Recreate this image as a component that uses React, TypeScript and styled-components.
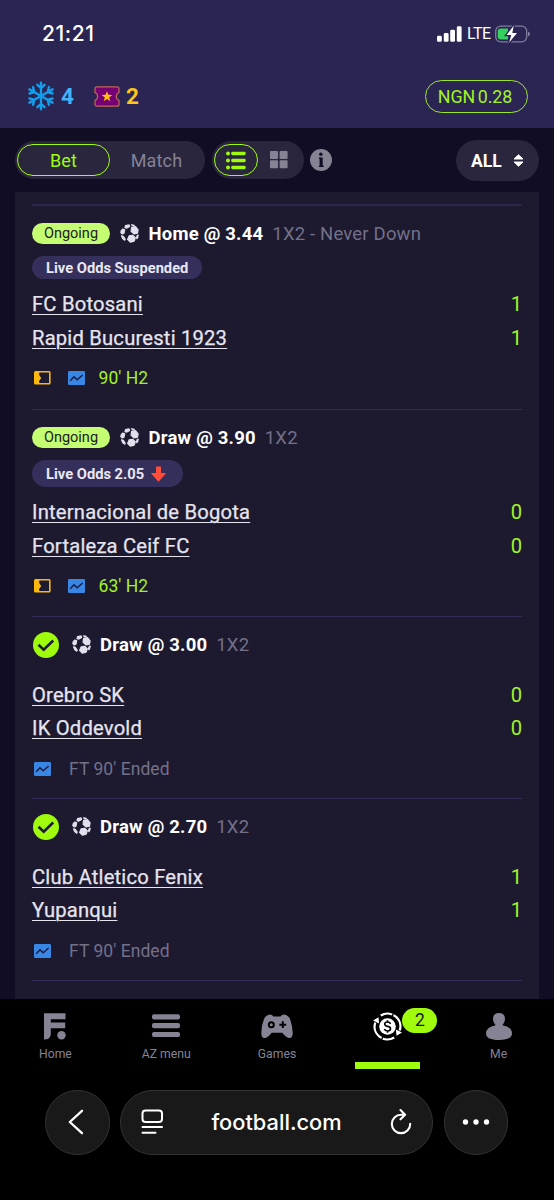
import React from 'react';
import styled, { createGlobalStyle } from 'styled-components';

const GlobalStyle = createGlobalStyle`
  * { box-sizing: border-box; }
  html, body { margin: 0; background: #000; }
  body { font-family: Roboto, "Liberation Sans", sans-serif; }
  svg { display: block; flex: none; }
`;

const LIME = '#9ffc0c';

const Screen = styled.div`
  width: 554px;
  height: 1200px;
  display: flex;
  flex-direction: column;
  overflow: hidden;
  background: #000;
`;

const Header = styled.header`
  height: 128px;
  flex: none;
  background: #2b2553;
`;

const StatusBar = styled.div`
  height: 64px;
  padding: 3px 24px 0 42px;
  display: flex;
  align-items: center;
  justify-content: space-between;
`;

const Clock = styled.span`
  font: 500 21px Inter, sans-serif;
  letter-spacing: 0.6px;
  color: #fff;
`;

const StatusIcons = styled.div`
  display: flex;
  align-items: center;
`;

const Network = styled.span`
  font: 400 16px Roboto, sans-serif;
  letter-spacing: -0.5px;
  color: #fff;
  margin: 0 4px 0 5px;
  width: 24px;
`;

const WalletBar = styled.div`
  height: 64px;
  padding: 0 26px 0 28px;
  display: flex;
  align-items: center;
`;

const Count = styled.span<{ $color: string }>`
  font-size: 22.5px;
  font-weight: 700;
  line-height: 28px;
  color: ${(p) => p.$color};
  width: 13px;
`;

const Balance = styled.div`
  margin-left: auto;
  width: 103px;
  height: 33px;
  border: 1.5px solid #9be827;
  border-radius: 17px;
  display: flex;
  align-items: center;
  justify-content: center;
  font-size: 17.8px;
  letter-spacing: -0.1px;
  word-spacing: -1.5px;
  padding-right: 3px;
  color: #a3f326;
  white-space: nowrap;
`;

const Body = styled.main`
  height: 871px;
  flex: none;
  overflow: hidden;
  background: #100d25;
  padding: 0 15px;
`;

const Toolbar = styled.div`
  height: 64px;
  display: flex;
  align-items: center;
`;

const Segment = styled.div<{ $width: number }>`
  width: ${(p) => p.$width}px;
  height: 38px;
  padding: 3px 2px;
  border-radius: 19px;
  background: #29263d;
  display: flex;
`;

const SegmentItem = styled.div<{ $width: number; $active?: boolean }>`
  width: ${(p) => p.$width}px;
  height: 32px;
  border-radius: 16px;
  border: ${(p) => (p.$active ? `1.5px solid ${LIME}` : '0')};
  color: ${(p) => (p.$active ? LIME : '#858298')};
  display: flex;
  align-items: center;
  justify-content: center;
  font-size: 18px;
  letter-spacing: 0.2px;
`;

const Filter = styled.div`
  margin-left: auto;
  width: 83px;
  height: 41px;
  border-radius: 21px;
  background: #29263d;
  color: #fff;
  font-size: 17.5px;
  font-weight: 700;
  display: flex;
  align-items: center;
  justify-content: space-between;
  padding: 1px 15px 0 15px;
`;

const Card = styled.section`
  height: 807px;
  background: #1d1a2f;
  padding: 12px 17px 0;
`;

const Match = styled.article<{ $first?: boolean }>`
  border-top: ${(p) => (p.$first ? 2 : 1)}px solid ${(p) => (p.$first ? '#2b2748' : '#332e55')};
  padding: ${(p) => (p.$first ? '14px 0 18.3px' : '14.7px 0 17.5px')};
`;

const MatchHead = styled.div<{ $settled: boolean }>`
  display: flex;
  align-items: center;
  height: ${(p) => (p.$settled ? 26 : 27)}px;
  margin-bottom: ${(p) => (p.$settled ? 19 : 9)}px;
`;

const Ongoing = styled.span`
  width: 78px;
  height: 21px;
  border-radius: 11px;
  background: #c4fd72;
  color: #1a1b22;
  font-size: 14.5px;
  line-height: 21px;
  text-align: center;
  margin-right: 10px;
`;

const CheckSlot = styled.span`
  width: 39.5px;
  padding-left: 1px;
`;

const Pick = styled.strong`
  font-size: 18.5px;
  font-weight: 700;
  letter-spacing: 0.2px;
  color: #fff;
  margin-left: 9.6px;
  white-space: nowrap;
`;

const Market = styled.span`
  font-size: 18.5px;
  letter-spacing: 0.18px;
  color: #73708a;
  margin-left: 9px;
  white-space: nowrap;
`;

const LiveOdds = styled.div<{ $tall: boolean }>`
  display: flex;
  align-items: center;
  gap: 7px;
  width: fit-content;
  height: ${(p) => (p.$tall ? 26.5 : 22.5)}px;
  padding: 1px ${(p) => (p.$tall ? 16.5 : 14)}px 0 14px;
  margin-bottom: ${(p) => (p.$tall ? 7.6 : 7.8)}px;
  border-radius: 14px;
  background: #352f5b;
  color: #e9e7f2;
  font-size: 14.7px;
  font-weight: 700;
`;

const TeamRow = styled.div`
  display: flex;
  justify-content: space-between;
  height: 33.5px;
  padding-top: 1px;
  line-height: 34px;
  font-size: 20.2px;
`;

const Team = styled.span`
  color: #e6e4ef;
  letter-spacing: 0.2px;
  -webkit-text-stroke: 0.25px #e6e4ef;
  text-decoration: underline;
  text-decoration-thickness: 1.3px;
  text-underline-offset: 2.6px;
`;

const Score = styled.span`
  color: #a3f326;
`;

const MatchFoot = styled.div`
  display: flex;
  align-items: center;
  height: 24px;
  margin-top: 13px;
  padding-left: 2px;
`;

const Period = styled.span<{ $ended: boolean }>`
  margin-left: ${(p) => (p.$ended ? 18 : 14)}px;
  font-size: 17.5px;
  letter-spacing: 0.05px;
  color: ${(p) => (p.$ended ? '#73708a' : '#a3f326')};
`;

const TabBar = styled.nav`
  height: 71px;
  flex: none;
  display: grid;
  grid-template-columns: repeat(5, 1fr);
`;

const Tab = styled.div`
  position: relative;
  display: flex;
  flex-direction: column;
  align-items: center;
  padding-top: 11px;
  color: #858394;
  font-size: 12.2px;
`;

const TabIcon = styled.div`
  height: 32px;
  display: flex;
  align-items: center;
`;

const TabLabel = styled.span`
  line-height: 25px;
`;

const ActiveMark = styled.div`
  width: 65px;
  height: 7px;
  margin: 20px 0 0 -1px;
  background: ${LIME};
`;

const Badge = styled.span`
  position: absolute;
  left: 70px;
  top: 9px;
  width: 35px;
  height: 25px;
  border-radius: 13px;
  background: ${LIME};
  color: #15171b;
  font-size: 17.5px;
  line-height: 25px;
  text-align: center;
`;

const BrowserBar = styled.footer`
  display: flex;
  gap: 10.5px;
  padding: 20px 0 0 45px;
`;

const RoundButton = styled.div`
  width: 64.5px;
  height: 64.5px;
  border-radius: 50%;
  border: 1px solid #333;
  background: #191919;
  display: flex;
  align-items: center;
  justify-content: center;
`;

const AddressBar = styled.div`
  width: 313px;
  height: 64.5px;
  border-radius: 33px;
  border: 1px solid #333;
  background: #191919;
  display: flex;
  align-items: center;
  justify-content: space-between;
  padding: 0 20px;
  color: #fff;
  font: 500 21.8px Inter, sans-serif;
`;

const SignalIcon = () => (
  <svg width="25" height="16" viewBox="0 0 25 16" fill="#fff">
    <rect x="0" y="9.8" width="4.8" height="6" rx="1.4" />
    <rect x="6.8" y="7" width="4.8" height="8.8" rx="1.4" />
    <rect x="13.2" y="3.7" width="4.8" height="12.1" rx="1.4" />
    <rect x="19.8" y="0.3" width="4.8" height="15.5" rx="1.4" />
  </svg>
);

const BatteryIcon = () => (
  <svg width="35" height="18" viewBox="0 0 35 18">
    <rect x="0.7" y="1.2" width="31" height="15.6" rx="5" fill="none" stroke="#807c9b" strokeWidth="1.3" />
    <path d="M33 6.5q2 .7 2 2.5t-2 2.5z" fill="#807c9b" />
    <path d="M6 3.5h7v11H6q-3.3 0-3.3-3.2V6.7Q2.7 3.5 6 3.5z" fill="#35d15f" />
    <path d="M18.8 0.5 11.6 10h4.6l-2 7.5L22 8h-4.7z" fill="#fff" stroke="#2b2553" strokeWidth="2.6" paintOrder="stroke" />
  </svg>
);

const SnowflakeIcon = () => (
  <svg width="26" height="30" viewBox="-13 -15 26 30" fill="none" stroke="#129cea" strokeWidth="2.4" strokeLinecap="round">
    {[0, 60, 120, 180, 240, 300].map((a) => (
      <path key={a} transform={`rotate(${a})`} d="M0 0V-13.3M-3.6 -11.2 0 -7.8 3.6 -11.2" />
    ))}
  </svg>
);

const TicketIcon = () => (
  <svg width="26" height="21" viewBox="0 0 26 21">
    <path
      d="M3 .8h20q2 0 2 2v3.7a4.2 4.2 0 0 0 0 7.8v3.9q0 2-2 2H3q-2 0-2-2v-3.9a4.2 4.2 0 0 0 0-7.8V2.8q0-2 2-2z"
      fill="#740073"
      stroke="#c06a50"
      strokeWidth="1.2"
    />
    <path d="m13 5.2 1.4 3.6 3.9.1-3.1 2.5 1.1 3.8-3.3-2.2-3.3 2.2 1.1-3.8-3.1-2.5 3.900-.1z" fill="#fdbd12" />
  </svg>
);

const ListIcon = () => (
  <svg width="20" height="19" viewBox="0 0 20 19" fill={LIME}>
    {[2.5, 9.5, 16.5].map((y) => (
      <React.Fragment key={y}>
        <circle cx="2" cy={y} r="2" />
        <rect x="5.2" y={y - 1.7} width="14.5" height="3.4" rx="1.4" />
      </React.Fragment>
    ))}
  </svg>
);

const GridIcon = () => (
  <svg width="18" height="18" viewBox="0 0 18 18" fill="#858394">
    <rect width="8" height="8" rx="1" />
    <rect x="9.6" width="8" height="8" rx="1" />
    <rect y="9.3" width="8" height="8" rx="1" />
    <rect x="9.6" y="9.3" width="8" height="8" rx="1" />
  </svg>
);

const InfoIcon = styled(({ className }: { className?: string }) => (
  <svg className={className} width="22" height="22" viewBox="0 0 22 22">
    <circle cx="11" cy="11" r="11" fill="#858394" />
    <circle cx="10.8" cy="5.2" r="1.7" fill="#100d25" />
    <path d="M8.9 8.5h3.8v8.2h1v1.4H8.9v-1.4h.7V9.9h-.7z" fill="#100d25" />
  </svg>
))`
  margin-left: 6px;
`;

const SortIcon = () => (
  <svg width="11" height="13" viewBox="0 0 11 13" fill="#fff" stroke="#fff" strokeWidth="1" strokeLinejoin="round">
    <path d="M5.5 .8 10 5H1zM5.5 12.2 10 8H1z" />
  </svg>
);

const BallIcon = () => (
  <svg width="19" height="19" viewBox="0 0 19 19" fill="#e2e0ec" stroke="#e2e0ec" strokeWidth="1.2" strokeLinejoin="round">
    <path d="m11.6 3.3 3.900-.7 2.600 3.200-.6 3.400-3.300.8-3.100-2.600z" />
    <path d="m9.200 11.800 3.400-.500 2.700 2.400-1.100 3.400-3.900 1.100-2.700-2.800z" />
    <path d="M5.500 1.700 9.100.9l.5 1.500-2.700 1.700-1.900-.4z" />
    <path d="m2.800 5 1.900.8-.7 3.300-1.700.9-1.500-1.400q0-2.200 2-3.600z" />
    <path d="m1.500 11.800 1.800.5 1.900 2.700-.5 1.200Q2.200 15 1.500 11.800zM11.500.8q2 0 2.800.7l-1.700.2zM18.200 11.200q-.2 2.400-1.400 3.500l-.2-1.400.7-1.900z" />
  </svg>
);

const CheckIcon = () => (
  <svg width="26" height="26" viewBox="0 0 26 26">
    <circle cx="13" cy="13" r="13" fill={LIME} />
    <path d="m5.5 12.8 5.200 5 9.500-9.300" fill="none" stroke="#1d1a2f" strokeWidth="2.6" />
  </svg>
);

const StreamIcon = styled(({ className }: { className?: string }) => (
  <svg className={className} width="17" height="14" viewBox="0 0 17 14">
    <rect x=".8" y=".8" width="15" height="12" rx=".7" fill="none" stroke="#fbb90d" strokeWidth="1.6" />
    <path d="M1 1h4.300v12H1z" fill="#fbb90d" />
    <path d="M4.900 2.700h2.300L10.700 7l-3.500 4.300H4.900L7.300 7z" fill="#1d1a2f" />
    <path d="M4.500 3.400 7.300 7l-2.800 3.600z" fill="#fbb90d" />
  </svg>
))`
  margin-right: 16.5px;
`;

const ChartIcon = () => (
  <svg width="17" height="14" viewBox="0 0 17 14">
    <rect width="17" height="14" rx="1.3" fill="#3987e5" />
    <path d="M2.2 9.8 6 5.8l3.2 3L14.6 4" fill="none" stroke="#1d1a40" strokeWidth="1.5" />
  </svg>
);

const DownIcon = () => (
  <svg width="15" height="16" viewBox="0 0 15 16" fill="#ff4d3c">
    <path d="M5 .4h5V7h4.2q1 .2.3 1L7.5 15.7.5 8q-.6-.8.3-1H5z" />
  </svg>
);

const LogoIcon = () => (
  <svg width="22" height="27" viewBox="0 0 22 27" fill="#858394">
    <path d="M0 .3h21.5v6H6.8v3.2h14.4v5.8H6.8v5.6q0 5.5-6.8 5.5z" />
    <circle cx="17.5" cy="22.3" r="4.2" />
  </svg>
);

const MenuIcon = () => (
  <svg width="28" height="24" viewBox="0 0 28 24" fill="#858394">
    <rect width="28" height="5.2" rx="2" y=".2" />
    <rect width="28" height="5.2" rx="2" y="9" />
    <rect width="28" height="5.2" rx="2" y="17.9" />
  </svg>
);

const GamepadIcon = () => (
  <svg width="32" height="25" viewBox="0 0 32 25">
    <path d="M7 1Q10.5-.3 12.5 2.6h7Q21.5-.3 25 1q3 1 4.2 4.6 2.6 7.4 2.5 13.5 0 6.3-4.8 4.7-2.7-1.2-5.7-5H10.8q-3 3.8-5.7 5Q.3 25.4.3 19.1.2 13 2.8 5.6 4 2 7 1z" fill="#858394" />
    <circle cx="10.3" cy="10.7" r="2.5" fill="none" stroke="#000" strokeWidth="2" />
    <path d="M21.8 7.3v6.8M18.4 10.7h6.8" stroke="#000" strokeWidth="2" />
  </svg>
);

const CoinIcon = () => (
  <svg width="29" height="29" viewBox="0 0 29 29" fill="none">
    <circle cx="14.5" cy="14.5" r="8.3" fill="#fff" />
    <path d="M17.5 11.9q-.7-1.900-3-1.900-2.800 0-2.800 2.100 0 1.800 2.800 2.300 3 .5 3 2.400 0 2.200-3 2.200-2.500 0-3.100-1.900M14.500 8.300v1.700M14.500 19v1.700" stroke="#000" strokeWidth="1.6" />
    <path d="M7.800 3.500A12.800 12.800 0 0 1 26.700 18.500M21.200 25.500A12.800 12.800 0 0 1 2.300 10.500" stroke="#fff" strokeWidth="2.3" />
    <path d="M0 8.500 5.500 5.200l.6 6.300zM29 20.500l-5.500 3.300-.6-6.300z" fill="#fff" />
    <path d="m19.200 4.500 1.200-3.500M9.800 24.500 8.600 28" stroke="#000" strokeWidth="1.3" />
  </svg>
);

const PersonIcon = () => (
  <svg width="26" height="27" viewBox="0 0 26 27" fill="#858394">
    <path d="M13 0q6 0 6 6.2 0 3.3-2.6 6Q26 14 26 20.5 26 27 13 27T0 20.5Q0 14 9.6 12.2 7 9.5 7 6.2 7 0 13 0z" />
  </svg>
);

const BackIcon = () => (
  <svg width="19" height="26" viewBox="0 0 19 26" fill="none" stroke="#fff" strokeWidth="2.3" strokeLinecap="round" strokeLinejoin="round">
    <path d="M14 1.8 1.8 13 14 24.2" />
  </svg>
);

const ReaderIcon = () => (
  <svg width="22" height="26" viewBox="0 0 22 26" fill="none" stroke="#fff" strokeWidth="2" strokeLinecap="round">
    <rect x="1.5" y="1.5" width="19.5" height="11.5" rx="3" />
    <path d="M1.5 18h19.5M1.5 23.7h13" />
  </svg>
);

const ReloadIcon = () => (
  <svg width="22" height="26" viewBox="0 0 22 26" fill="none" stroke="#fff" strokeWidth="2.1" strokeLinecap="round" strokeLinejoin="round">
    <path d="M14.5 5.7H11a9.2 9.2 0 1 0 9.2 9.2M10.5 1.1l4.6 4.6-4.6 4.6" />
  </svg>
);

const MoreIcon = () => (
  <svg width="28" height="6" viewBox="0 0 28 6" fill="#fff">
    <circle cx="3.5" cy="3" r="2.7" />
    <circle cx="14" cy="3" r="2.7" />
    <circle cx="24.5" cy="3" r="2.7" />
  </svg>
);

interface Bet {
  pick: string;
  market: string;
  live?: string;
  dropping?: boolean;
  teams: [string, number][];
  period: string;
  settled: boolean;
}

const bets: Bet[] = [
  { pick: 'Home @ 3.44', market: '1X2 - Never Down', live: 'Live Odds Suspended', teams: [['FC Botosani', 1], ['Rapid Bucuresti 1923', 1]], period: "90' H2", settled: false },
  { pick: 'Draw @ 3.90', market: '1X2', live: 'Live Odds 2.05', dropping: true, teams: [['Internacional de Bogota', 0], ['Fortaleza Ceif FC', 0]], period: "63' H2", settled: false },
  { pick: 'Draw @ 3.00', market: '1X2', teams: [['Orebro SK', 0], ['IK Oddevold', 0]], period: "FT 90' Ended", settled: true },
  { pick: 'Draw @ 2.70', market: '1X2', teams: [['Club Atletico Fenix', 1], ['Yupanqui', 1]], period: "FT 90' Ended", settled: true },
];

const MatchItem = ({ bet, first }: { bet: Bet; first: boolean }) => (
  <Match $first={first}>
    <MatchHead $settled={bet.settled}>
      {bet.settled ? <CheckSlot><CheckIcon /></CheckSlot> : <Ongoing>Ongoing</Ongoing>}
      <BallIcon />
      <Pick>{bet.pick}</Pick>
      <Market>{bet.market}</Market>
    </MatchHead>
    {bet.live && (
      <LiveOdds $tall={!!bet.dropping}>
        {bet.live}
        {bet.dropping && <DownIcon />}
      </LiveOdds>
    )}
    {bet.teams.map(([name, score]) => (
      <TeamRow key={name}>
        <Team>{name}</Team>
        <Score>{score}</Score>
      </TeamRow>
    ))}
    <MatchFoot>
      {!bet.settled && <StreamIcon />}
      <ChartIcon />
      <Period $ended={bet.settled}>{bet.period}</Period>
    </MatchFoot>
  </Match>
);

const TicketGap = styled.div`
  margin: 0 6px 0 20px;
`;

const SnowGap = styled.div`
  margin-right: 7px;
`;

const ViewSwitch = styled.div`
  margin-left: 7px;
`;

const ClosingRule = styled.div`
  height: 1px;
  background: #332e55;
`;

export default function App() {
  return (
    <Screen>
      <GlobalStyle />
      <Header>
        <StatusBar>
          <Clock>21:21</Clock>
          <StatusIcons>
            <SignalIcon />
            <Network>LTE</Network>
            <BatteryIcon />
          </StatusIcons>
        </StatusBar>
        <WalletBar>
          <SnowGap><SnowflakeIcon /></SnowGap>
          <Count $color="#41b4f8">4</Count>
          <TicketGap><TicketIcon /></TicketGap>
          <Count $color="#fdc41e">2</Count>
          <Balance>NGN 0.28</Balance>
        </WalletBar>
      </Header>
      <Body>
        <Toolbar>
          <Segment $width={190}>
            <SegmentItem $width={93} $active>Bet</SegmentItem>
            <SegmentItem $width={93}>Match</SegmentItem>
          </Segment>
          <ViewSwitch>
            <Segment $width={92}>
              <SegmentItem $width={44} $active><ListIcon /></SegmentItem>
              <SegmentItem $width={42}><GridIcon /></SegmentItem>
            </Segment>
          </ViewSwitch>
          <InfoIcon />
          <Filter>ALL<SortIcon /></Filter>
        </Toolbar>
        <Card>
          {bets.map((bet, i) => (
            <MatchItem key={bet.teams[0][0]} bet={bet} first={i === 0} />
          ))}
          <ClosingRule />
        </Card>
      </Body>
      <TabBar>
        <Tab><TabIcon><LogoIcon /></TabIcon><TabLabel>Home</TabLabel></Tab>
        <Tab><TabIcon><MenuIcon /></TabIcon><TabLabel>AZ menu</TabLabel></Tab>
        <Tab><TabIcon><GamepadIcon /></TabIcon><TabLabel>Games</TabLabel></Tab>
        <Tab><TabIcon><CoinIcon /></TabIcon><Badge>2</Badge><ActiveMark /></Tab>
        <Tab><TabIcon><PersonIcon /></TabIcon><TabLabel>Me</TabLabel></Tab>
      </TabBar>
      <BrowserBar>
        <RoundButton><BackIcon /></RoundButton>
        <AddressBar><ReaderIcon />football.com<ReloadIcon /></AddressBar>
        <RoundButton><MoreIcon /></RoundButton>
      </BrowserBar>
    </Screen>
  );
}
